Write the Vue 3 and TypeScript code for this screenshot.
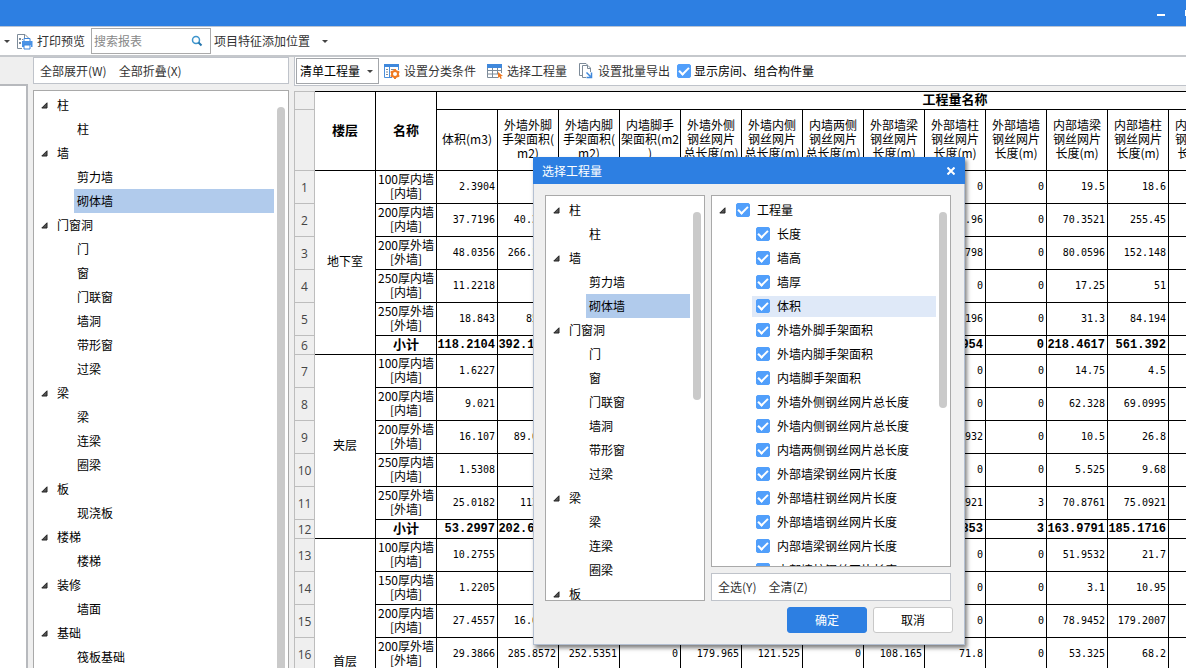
<script setup lang="ts">
import { ref } from 'vue'

interface TreeRow {
  label: string
  group?: boolean
}

interface SheetRow {
  no: number
  name: string
  values: string[]
  floor?: string
  span?: number
  total?: boolean
}

const components: TreeRow[] = [
  { label: '柱', group: true },
  { label: '柱' },
  { label: '墙', group: true },
  { label: '剪力墙' },
  { label: '砌体墙' },
  { label: '门窗洞', group: true },
  { label: '门' },
  { label: '窗' },
  { label: '门联窗' },
  { label: '墙洞' },
  { label: '带形窗' },
  { label: '过梁' },
  { label: '梁', group: true },
  { label: '梁' },
  { label: '连梁' },
  { label: '圈梁' },
  { label: '板', group: true },
  { label: '现浇板' },
  { label: '楼梯', group: true },
  { label: '楼梯' },
  { label: '装修', group: true },
  { label: '墙面' },
  { label: '基础', group: true },
  { label: '筏板基础' },
]

const dialogComponents = components.slice(0, 17)

const quantities = ref(
  [
    '长度',
    '墙高',
    '墙厚',
    '体积',
    '外墙外脚手架面积',
    '外墙内脚手架面积',
    '内墙脚手架面积',
    '外墙外侧钢丝网片总长度',
    '外墙内侧钢丝网片总长度',
    '内墙两侧钢丝网片总长度',
    '外部墙梁钢丝网片长度',
    '外部墙柱钢丝网片长度',
    '外部墙墙钢丝网片长度',
    '内部墙梁钢丝网片长度',
    '内部墙柱钢丝网片长度',
  ].map((label) => ({ label, checked: true })),
)

const headings: string[] = [
  '体积(m3)',
  '外墙外脚\n手架面积(\nm2)',
  '外墙内脚\n手架面积(\nm2)',
  '内墙脚手\n架面积(m2\n)',
  '外墙外侧\n钢丝网片\n总长度(m)',
  '外墙内侧\n钢丝网片\n总长度(m)',
  '内墙两侧\n钢丝网片\n总长度(m)',
  '外部墙梁\n钢丝网片\n长度(m)',
  '外部墙柱\n钢丝网片\n长度(m)',
  '外部墙墙\n钢丝网片\n长度(m)',
  '内部墙梁\n钢丝网片\n长度(m)',
  '内部墙柱\n钢丝网片\n长度(m)',
  '内部墙墙\n钢丝网片\n长度(m)',
  '',
  '',
  '',
  '',
]

function cells(volume: string, scaffold: string, ...tail: string[]): string[] {
  return [volume, scaffold, '', '', '', '', '', '', ...tail, '', '', '', '', '']
}

const rows: SheetRow[] = [
  { no: 1, floor: '地下室', span: 6, name: '100厚内墙\n[内墙]', values: cells('2.3904', '', '0', '0', '19.5', '18.6') },
  { no: 2, name: '200厚内墙\n[内墙]', values: cells('37.7196', '40.3200', '96.96', '0', '70.3521', '255.45') },
  { no: 3, name: '200厚外墙\n[外墙]', values: cells('48.0356', '266.1000', '9.798', '0', '80.0596', '152.148') },
  { no: 4, name: '250厚内墙\n[内墙]', values: cells('11.2218', '', '0', '0', '17.25', '51') },
  { no: 5, name: '250厚外墙\n[外墙]', values: cells('18.843', '85.72', '8.196', '0', '31.3', '84.194') },
  { no: 6, total: true, name: '小计', values: cells('118.2104', '392.1400', '114.954', '0', '218.4617', '561.392') },
  { no: 7, floor: '夹层', span: 6, name: '100厚内墙\n[内墙]', values: cells('1.6227', '', '0', '0', '14.75', '4.5') },
  { no: 8, name: '200厚内墙\n[内墙]', values: cells('9.021', '', '0', '0', '62.328', '69.0995') },
  { no: 9, name: '200厚外墙\n[外墙]', values: cells('16.107', '89.0000', '2.932', '0', '10.5', '26.8') },
  { no: 10, name: '250厚内墙\n[内墙]', values: cells('1.5308', '', '0', '0', '5.525', '9.68') },
  { no: 11, name: '250厚外墙\n[外墙]', values: cells('25.0182', '113.60', '5.921', '3', '70.8761', '75.0921') },
  { no: 12, total: true, name: '小计', values: cells('53.2997', '202.6000', '8.853', '3', '163.9791', '185.1716') },
  { no: 13, floor: '首层', span: 5, name: '100厚内墙\n[内墙]', values: cells('10.2755', '', '0', '0', '51.9532', '21.7') },
  { no: 14, name: '150厚内墙\n[内墙]', values: cells('1.2205', '', '0', '0', '3.1', '10.95') },
  { no: 15, name: '200厚内墙\n[内墙]', values: cells('27.4557', '16.0000', '0', '0', '78.9452', '179.2007') },
  {
    no: 16,
    name: '200厚外墙\n[外墙]',
    values: ['29.3866', '285.8572', '252.5351', '0', '179.965', '121.525', '0', '108.165', '71.8', '0', '53.325', '68.2', '', '', '', '', ''],
  },
]

const selected = ref('砌体墙')
const dialogSelected = ref('砌体墙')
const showRooms = ref(true)
const dialogOpen = ref(true)
const allQuantities = ref(true)

function setAll(value: boolean) {
  allQuantities.value = value
  quantities.value.forEach((q) => (q.checked = value))
}
</script>

<template>
  <div class="window">
    <header class="titlebar">
      <button class="win-button minimise" aria-label="最小化"></button>
      <button class="win-button maximise" aria-label="最大化"></button>
    </header>

    <div class="ribbon">
      <span class="caret"></span>
      <button class="tool preview">
        <svg width="17" height="17" viewBox="0 0 17 17" fill="none">
          <path d="M6 15.5H1.500V1.500H9L12.500 5V7M8.500 1.500V5.500H12" stroke="#7d8b99" />
          <path d="M3 5h2v2H3zM3 9h2v2H3zM6 6h1v1H6z" fill="#7d8b99" />
          <path d="M8 8V5.500h6V8" stroke="#3a84dc" fill="#fff" />
          <path d="M6 8h10.500v6H15v-2H8v2H6z" fill="#4a93e6" />
          <path d="M8 12h6v4H8z" stroke="#3a84dc" fill="#fff" />
        </svg>
        <span>打印预览</span>
      </button>
      <label class="search">
        <input type="text" placeholder="搜索报表" aria-label="搜索报表" />
        <svg width="12" height="12" viewBox="0 0 12 12" fill="none">
          <circle cx="5" cy="5" r="3.500" stroke="#3d94cc" stroke-width="1.500" />
          <path d="M7.500 7.500l3 3" stroke="#2475ad" stroke-width="2" />
        </svg>
      </label>
      <button class="tool position">
        <span>项目特征添加位置</span>
        <span class="caret"></span>
      </button>
    </div>

    <div class="workspace">
      <aside class="edge-panel"></aside>

      <nav class="navigator">
        <div class="bar">
          <button class="tool">全部展开(W)</button>
          <button class="tool">全部折叠(X)</button>
        </div>
        <div class="tree-box">
          <ul class="tree">
            <li v-for="(row, i) in components" :key="i" :class="{ group: row.group }">
              <svg v-if="row.group" class="arrow" width="7" height="7" viewBox="0 0 7 7">
                <path d="M6 .8V6H.8z" fill="#555" stroke="#222" />
              </svg>
              <button class="node" :class="{ selected: !row.group && row.label === selected }" @click="selected = row.label">
                {{ row.label }}
              </button>
            </li>
          </ul>
          <div class="scroll"></div>
        </div>
      </nav>

      <main class="report">
        <div class="bar options">
          <div class="picker">
            <select aria-label="工程量类型">
              <option>清单工程量</option>
            </select>
            <span class="caret"></span>
          </div>
          <button class="tool">
            <svg width="16" height="16" viewBox="0 0 16 16" fill="none">
              <path d="M.5 2v12.500H8M14.500 2v5M5.500 4v10" stroke="#4a8fdc" />
              <path d="M0 1h15v3H0z" fill="#3f88dc" />
              <path d="M2 6.500h2M2 9h2M2 11.500h2M7 6.500h3M7 9h1" stroke="#7d8b99" />
              <circle cx="11" cy="11" r="3" stroke="#f07a22" stroke-width="2" />
              <path d="M11 6v2M11 14v2M6.700 8.500l1.700 1M13.600 12.500l1.700 1M6.700 13.500l1.700-1M13.600 9.500l1.700-1" stroke="#f07a22" stroke-width="2" />
            </svg>
            <span>设置分类条件</span>
          </button>
          <button class="tool">
            <svg width="16" height="16" viewBox="0 0 16 16" fill="none">
              <path d="M.5 2v12.500H11M14.500 2v8M5.500 4v10M10.500 4v7M1 7.500h13M1 11h10" stroke="#7d8b99" />
              <path d="M0 1h15v4H0z" fill="#3f88dc" />
              <path d="M11 9l5 4-2.200.3 1 2.200-1.300.5-1-2.200L11 15z" fill="#f07a22" />
            </svg>
            <span>选择工程量</span>
          </button>
          <button class="tool">
            <svg width="16" height="16" viewBox="0 0 16 16" fill="none">
              <path d="M4 12.500H1.500V.5H8L9.500 2" stroke="#7d8b99" />
              <path d="M8 14.500H4.500v-12H10l2.500 2.500v4M9.500 2.500v3h3" stroke="#7d8b99" />
              <path d="M8.500 9.500l4 4M13.500 9.500v5h-5" stroke="#3f88dc" stroke-width="1.500" />
            </svg>
            <span>设置批量导出</span>
          </button>
          <label class="check-label">
            <input v-model="showRooms" type="checkbox" class="check" />
            <span>显示房间、组合构件量</span>
          </label>
        </div>

        <div class="sheet">
          <table>
            <colgroup>
              <col class="col-number" />
              <col v-for="n in 19" :key="n" class="col-value" />
            </colgroup>
            <thead>
              <tr class="title-row">
                <th class="number"></th>
                <th rowspan="2" class="strong">楼层</th>
                <th rowspan="2" class="strong">名称</th>
                <th colspan="17" class="strong">工程量名称</th>
              </tr>
              <tr class="heading-row">
                <th class="number"></th>
                <th v-for="(heading, i) in headings" :key="i">{{ heading }}</th>
              </tr>
            </thead>
            <tbody>
              <tr v-for="row in rows" :key="row.no" :class="{ total: row.total }">
                <th class="number">{{ row.no }}</th>
                <td v-if="row.floor" :rowspan="row.span">{{ row.floor }}</td>
                <td class="name">{{ row.name }}</td>
                <td v-for="(value, i) in row.values" :key="i" class="value">{{ value }}</td>
              </tr>
              <tr class="rest">
                <th class="number"></th>
                <td v-for="n in 18" :key="n"></td>
              </tr>
            </tbody>
          </table>
        </div>
      </main>
    </div>

    <section v-if="dialogOpen" class="dialog" role="dialog" aria-label="选择工程量">
      <header class="dialog-title">
        <span>选择工程量</span>
        <button class="close" aria-label="关闭" @click="dialogOpen = false">
          <svg width="8" height="8" viewBox="0 0 8 8">
            <path d="M.5 .5l7 7M7.500 .5l-7 7" stroke="#fff" stroke-width="2" />
          </svg>
        </button>
      </header>
      <div class="dialog-body">
        <div class="tree-box components">
          <ul class="tree">
            <li v-for="(row, i) in dialogComponents" :key="i" :class="{ group: row.group }">
              <svg v-if="row.group" class="arrow" width="7" height="7" viewBox="0 0 7 7">
                <path d="M6 .8V6H.8z" fill="#555" stroke="#222" />
              </svg>
              <button class="node" :class="{ selected: !row.group && row.label === dialogSelected }" @click="dialogSelected = row.label">
                {{ row.label }}
              </button>
            </li>
          </ul>
          <div class="scroll"></div>
        </div>
        <div class="choices">
          <div class="tree-box quantities">
            <ul class="tree">
              <li class="group">
                <svg class="arrow" width="7" height="7" viewBox="0 0 7 7">
                  <path d="M6 .8V6H.8z" fill="#555" stroke="#222" />
                </svg>
                <label class="choice">
                  <input v-model="allQuantities" type="checkbox" class="check" @change="setAll(allQuantities)" />
                  <span>工程量</span>
                </label>
              </li>
              <li v-for="q in quantities" :key="q.label">
                <label class="choice" :class="{ hovered: q.label === '体积' }">
                  <input v-model="q.checked" type="checkbox" class="check" />
                  <span>{{ q.label }}</span>
                </label>
              </li>
            </ul>
            <div class="scroll"></div>
          </div>
          <div class="bar">
            <button class="tool" @click="setAll(true)">全选(Y)</button>
            <button class="tool" @click="setAll(false)">全清(Z)</button>
          </div>
        </div>
      </div>
      <footer class="dialog-footer">
        <button class="action primary" @click="dialogOpen = false">确定</button>
        <button class="action" @click="dialogOpen = false">取消</button>
      </footer>
    </section>
  </div>
</template>

<style>
body {
  margin: 0;
  overflow: hidden;
}
</style>

<style scoped>
.window,
.window * {
  box-sizing: border-box;
}

.window {
  position: relative;
  display: flex;
  flex-direction: column;
  height: 100vh;
  overflow: hidden;
  background: #efefef;
  color: #000;
  font: 12px/16px 'Noto Sans CJK SC', sans-serif;
}

button,
input,
select {
  margin: 0;
  padding: 0;
  border: 0;
  background: none;
  color: inherit;
  font: inherit;
}

svg {
  flex: none;
}

.titlebar {
  display: flex;
  flex: none;
  justify-content: flex-end;
  gap: 20px;
  height: 27px;
  padding-top: 10px;
  overflow: hidden;
  background: #2d7fe2;
  border-bottom: 1px solid #b9c4d4;
}

.win-button {
  flex: none;
  width: 8px;
  height: 6px;
}

.minimise {
  border-bottom: 2px solid #fff;
}

.maximise {
  margin-right: -7px;
  border: 1px solid #fff;
}

.ribbon {
  display: flex;
  flex: none;
  align-items: center;
  height: 30px;
  padding-left: 4px;
  background: #fff;
  border-bottom: 2px solid #c5c8cc;
}

.caret {
  flex: none;
  border: 3px solid transparent;
  border-top-color: #444;
  border-bottom-width: 0;
}

.tool {
  display: flex;
  align-items: center;
  gap: 4px;
  color: #333;
  white-space: nowrap;
}

.preview {
  margin: 0 6px;
}

.search {
  display: flex;
  align-items: center;
  width: 120px;
  height: 26px;
  padding: 0 7px 0 2px;
  border: 1px solid #aaa;
}

.search input {
  flex: 1;
  min-width: 0;
  outline: 0;
}

.search input::placeholder {
  color: #888;
}

.position {
  gap: 12px;
  margin-left: 3px;
}

.workspace {
  display: flex;
  flex: 1;
  gap: 5px;
  min-height: 0;
}

.edge-panel {
  flex: none;
  width: 28px;
  margin-top: 27px;
  background: #fff;
  border: 2px solid #b7b9bd;
  border-width: 2px 2px 0 0;
}

.navigator {
  display: flex;
  flex: none;
  flex-direction: column;
  gap: 6px;
  width: 256px;
}

.bar {
  display: flex;
  flex: none;
  align-items: center;
  gap: 12px;
  height: 27px;
  padding-left: 6px;
  background: #fff;
  border: 1px solid #bfc3ca;
}

.tree-box {
  display: flex;
  flex: 1;
  gap: 3px;
  min-height: 0;
  padding: 2px 3px 0 7px;
  overflow: hidden;
  background: #fff;
  border: 1px solid #a9a9a9;
}

.navigator .tree-box {
  border-bottom: 0;
}

.tree {
  flex: 1;
  min-width: 0;
  margin: 0;
  padding: 0;
  list-style: none;
}

.tree li {
  display: flex;
  align-items: center;
  height: 24px;
  padding-left: 33px;
}

.tree .group {
  gap: 6px;
  padding-left: 0;
}

.node {
  flex: 1;
  height: 24px;
  padding-left: 3px;
  text-align: left;
}

.node.selected {
  background: #b1cbec;
}

.scroll {
  flex: none;
  width: 8px;
  margin-top: 14px;
  background: #cacaca;
  border-radius: 4px 4px 0 0;
}

.report {
  display: flex;
  flex: 1;
  flex-direction: column;
  gap: 5px;
  min-width: 0;
}

.options {
  gap: 11px;
  height: 29px;
  padding-left: 1px;
  border-width: 0 0 1px 1px;
}

.picker {
  display: flex;
  align-items: center;
  width: 83px;
  height: 26px;
  margin-right: -6px;
  padding: 0 5px 0 3px;
  border: 1px solid #a3a6aa;
}

.picker select {
  flex: 1;
  min-width: 0;
  appearance: none;
}

.check-label {
  display: flex;
  align-items: center;
  gap: 3px;
  margin-left: -4px;
  white-space: nowrap;
}

.check {
  display: grid;
  flex: none;
  place-items: center;
  width: 14px;
  height: 14px;
  border: 1px solid #999;
  border-radius: 2px;
  appearance: none;
}

.check:checked {
  background: #519ffb;
  border-color: #519ffb;
}

.check:checked::after {
  width: 8px;
  height: 4px;
  margin-bottom: 3px;
  border: 2px solid #fff;
  border-width: 0 0 2px 2px;
  content: '';
  transform: rotate(-45deg);
}

.sheet {
  flex: 1;
  min-height: 0;
  overflow: hidden;
  background: #fff;
}

table {
  width: 1180px;
  table-layout: fixed;
  border-collapse: separate;
  border-spacing: 0;
  line-height: 14px;
  text-align: center;
  white-space: pre;
}

.col-number {
  width: 21px;
}

.col-value {
  width: 61px;
}

th,
td {
  padding: 0 0 3px;
  border: 1px solid #000;
  border-width: 0 1px 1px 0;
  font-weight: 400;
}

tr {
  height: 33px;
}

.title-row {
  height: 19px;
}

.title-row th {
  border-top-width: 1px;
}

.heading-row {
  height: 61px;
}

.strong {
  font-size: 13px;
  font-weight: 700;
}

.number {
  padding: 2px 0 0;
  background: #efefef;
  border-color: #bdbdbd;
  border-left-width: 1px;
  color: #444;
  font-family: 'Open Sans', sans-serif;
}

.value {
  padding: 0 2px 0 0;
  font-family: 'DejaVu Sans Mono', monospace;
  font-size: 10px;
  text-align: right;
}

.total {
  height: 19px;
}

.total .name,
.total .value {
  font-weight: 700;
}

.total .name {
  font-size: 13px;
}

.total .value {
  font-family: 'Liberation Mono', monospace;
  font-size: 12px;
}

.rest {
  height: 115px;
}

.dialog {
  position: absolute;
  top: 157px;
  left: 533px;
  width: 432px;
  background: #efefef;
  box-shadow: 0 0 0 1px #b4c0d2 inset, 2px 3px 4px rgba(0, 0, 0, 0.5);
}

.dialog-title {
  display: flex;
  align-items: center;
  justify-content: space-between;
  height: 27px;
  padding: 0 10px 0 9px;
  background: #2d7fe2;
  color: #fff;
}

.close {
  display: flex;
}

.dialog-body {
  display: flex;
  gap: 6px;
  height: 417px;
  padding: 11px 14px 0 12px;
}

.dialog .components {
  flex: none;
  width: 160px;
}

.choices {
  display: flex;
  flex: 1;
  flex-direction: column;
  gap: 6px;
  min-width: 0;
}

.choices .bar {
  height: 28px;
}

.components .scroll {
  height: 188px;
  border-radius: 4px;
}

.quantities .scroll {
  height: 196px;
  border-radius: 4px;
}

.choice {
  display: flex;
  flex: 1;
  align-items: center;
  gap: 7px;
  height: 21px;
  padding-left: 4px;
  white-space: nowrap;
}

.choice.hovered {
  background: #dfe9f8;
}

.dialog-footer {
  display: flex;
  justify-content: flex-end;
  gap: 6px;
  padding: 6px 12px 12px;
}

.action {
  width: 80px;
  height: 26px;
  background: #fff;
  border: 1px solid #c8c8c8;
  border-radius: 3px;
}

.action.primary {
  background: #2d7fe2;
  border-color: #2d7fe2;
  color: #fff;
}
</style>
